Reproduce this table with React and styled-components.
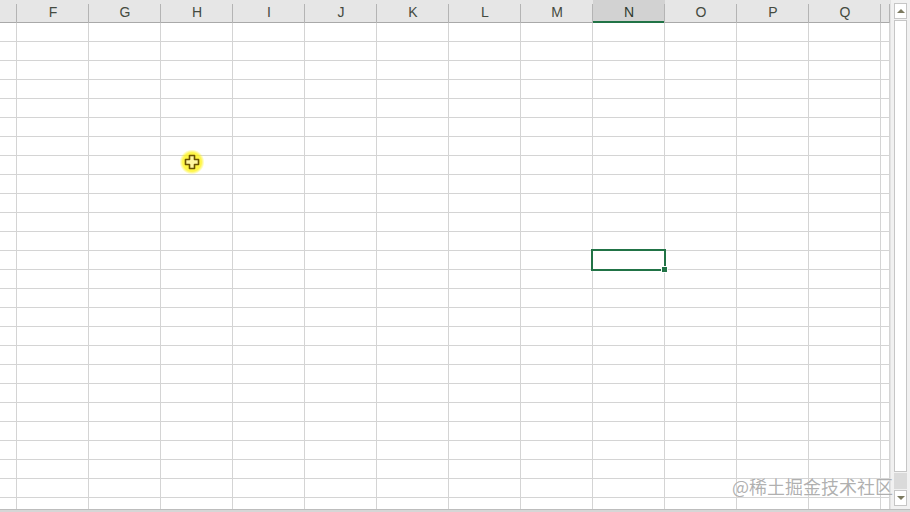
import styled, { createGlobalStyle } from "styled-components";

const GlobalStyle = createGlobalStyle`
  html, body {
    margin: 0;
    padding: 0;
    background: #ffffff;
  }
`;

const COLUMNS = [
  { name: "E", width: 17 },
  { name: "F", width: 72 },
  { name: "G", width: 72 },
  { name: "H", width: 72 },
  { name: "I", width: 72 },
  { name: "J", width: 72 },
  { name: "K", width: 72 },
  { name: "L", width: 72 },
  { name: "M", width: 72 },
  { name: "N", width: 72 },
  { name: "O", width: 72 },
  { name: "P", width: 72 },
  { name: "Q", width: 72 },
  { name: "R", width: 9 },
];

const ROW_COUNT = 26;
const ACTIVE = { col: "N", row: 12 };

export default function App() {
  const rows = Array.from({ length: ROW_COUNT }, (_, i) => i);

  return (
    <Page>
      <GlobalStyle />
      <Sheet>
        <Grid>
          <HeaderRow>
            {COLUMNS.map((c) => (
              <HeadCell key={c.name} w={c.width} active={c.name === ACTIVE.col}>
                {c.width > 20 ? c.name : ""}
              </HeadCell>
            ))}
          </HeaderRow>
          {rows.map((r) => (
            <Row key={r}>
              {COLUMNS.map((c) => (
                <Cell key={c.name} w={c.width}>
                  {c.name === ACTIVE.col && r === ACTIVE.row && (
                    <Selection>
                      <FillHandle />
                    </Selection>
                  )}
                </Cell>
              ))}
            </Row>
          ))}
        </Grid>
        <VScroll>
          <ArrowButton>
            <Triangle up />
          </ArrowButton>
          <Thumb />
          <Track />
          <ArrowButton>
            <Triangle />
          </ArrowButton>
        </VScroll>
      </Sheet>
      <HScrollEdge />

      <Cursor width="26" height="26" viewBox="0 0 26 26">
        <defs>
          <radialGradient id="glow" cx="50%" cy="50%" r="50%">
            <stop offset="0%" stopColor="#fff200" stopOpacity="0.85" />
            <stop offset="75%" stopColor="#fff200" stopOpacity="0.7" />
            <stop offset="100%" stopColor="#fff200" stopOpacity="0" />
          </radialGradient>
        </defs>
        <circle cx="13" cy="13" r="12.5" fill="url(#glow)" />
        <path
          d="M10.5 6.5 H15.5 V10.5 H19.5 V15.5 H15.5 V19.5 H10.5 V15.5 H6.5 V10.5 H10.5 Z"
          fill="#fff6a0"
          stroke="#6a5200"
          strokeWidth="1.6"
          strokeLinejoin="round"
        />
      </Cursor>

      <Watermark>@稀土掘金技术社区</Watermark>
    </Page>
  );
}

const Page = styled.div`
  position: relative;
  width: 910px;
  height: 512px;
  overflow: hidden;
  background: #ffffff;
  font-family: "Liberation Sans", Arial, sans-serif;
`;

const Sheet = styled.div`
  display: flex;
  height: 509px;
  overflow: hidden;
`;

const Grid = styled.div`
  width: 890px;
  flex: 0 0 890px;
  display: flex;
  flex-direction: column;
`;

const HeaderRow = styled.div`
  display: flex;
  height: 23px;
  flex: 0 0 23px;
  background: #e6e6e6;
`;

const HeadCell = styled.div`
  position: relative;
  box-sizing: border-box;
  width: ${(p) => p.w}px;
  flex: 0 0 ${(p) => p.w}px;
  height: 23px;
  padding-top: 3px;
  text-align: center;
  font-size: 14px;
  line-height: 18px;
  color: ${(p) => (p.active ? "#2f3b2f" : "#444a40")};
  background: ${(p) => (p.active ? "#d2d2d2" : "#e6e6e6")};
  border-bottom: ${(p) => (p.active ? "2px solid #217346" : "1px solid #a9a9a9")};

  &::after {
    content: "";
    position: absolute;
    right: 0;
    top: 4px;
    bottom: ${(p) => (p.active ? "-2px" : "-1px")};
    width: 1px;
    background: #b4b4b4;
  }
`;

const Row = styled.div`
  display: flex;
  height: 19px;
  flex: 0 0 19px;
  box-sizing: border-box;
  border-bottom: 1px solid #d4d4d4;
`;

const Cell = styled.div`
  position: relative;
  box-sizing: border-box;
  width: ${(p) => p.w}px;
  flex: 0 0 ${(p) => p.w}px;
  height: 18px;
  border-right: 1px solid #d4d4d4;
`;

const Selection = styled.div`
  position: absolute;
  left: -2px;
  top: -2px;
  width: 75px;
  height: 22px;
  box-sizing: border-box;
  border: 2px solid #217346;
  z-index: 2;
`;

const FillHandle = styled.div`
  position: absolute;
  right: -4px;
  bottom: -4px;
  width: 5px;
  height: 5px;
  background: #217346;
  border: 1px solid #ffffff;
`;

const VScroll = styled.div`
  flex: 0 0 20px;
  box-sizing: border-box;
  padding: 3px 3px 3px 3px;
  display: flex;
  flex-direction: column;
  gap: 1px;
  background: #f1f1f1;
  border-left: 1px solid #e2e2e2;
`;

const ArrowButton = styled.div`
  flex: 0 0 16px;
  box-sizing: border-box;
  display: flex;
  align-items: center;
  justify-content: center;
  background: #ffffff;
  border: 1px solid #c6c6c6;
`;

const Triangle = styled.div`
  width: 0;
  height: 0;
  border-left: 4px solid transparent;
  border-right: 4px solid transparent;
  ${(p) =>
    p.up
      ? "border-bottom: 4px solid #7c7a60;"
      : "border-top: 4px solid #7c7a60;"}
`;

const Thumb = styled.div`
  flex: 0 0 452px;
  box-sizing: border-box;
  background: #ffffff;
  border: 1px solid #c6c6c6;
`;

const Track = styled.div`
  flex: 1;
  background: #dadada;
`;

const HScrollEdge = styled.div`
  height: 3px;
  box-sizing: border-box;
  background: #d6d6d6;
  border-top: 1px solid #bdbdbd;
`;

const Cursor = styled.svg`
  position: absolute;
  left: 179px;
  top: 149px;
  z-index: 5;
`;

const Watermark = styled.div`
  position: absolute;
  right: 17px;
  top: 474px;
  z-index: 4;
  font-family: "Noto Sans CJK SC", "Liberation Sans", sans-serif;
  font-size: 18px;
  line-height: 24px;
  color: rgba(150, 150, 150, 0.75);
  letter-spacing: 0;
  text-shadow: 0 0 1px rgba(255, 255, 255, 0.8);
  white-space: nowrap;
`;
